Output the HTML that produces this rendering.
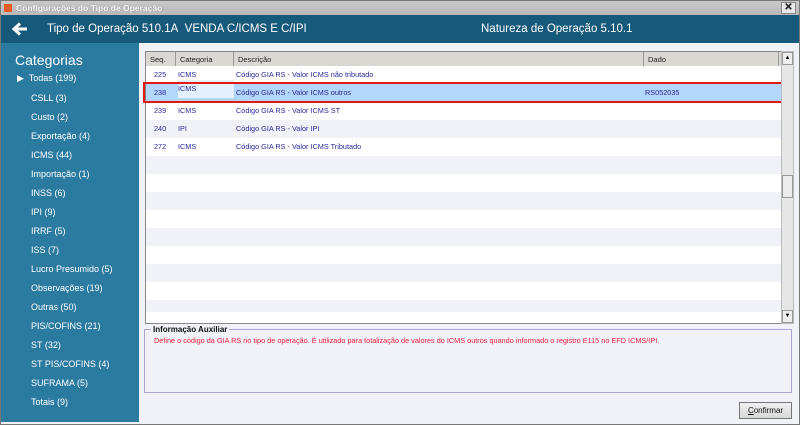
<!DOCTYPE html>
<html><head><meta charset="utf-8"><style>
*{margin:0;padding:0;box-sizing:border-box}
body{width:800px;height:425px;overflow:hidden;background:#6e6e6e;font-family:"Liberation Sans",sans-serif;position:relative}
.win{position:absolute;left:0;top:0;width:800px;height:425px;border:1px solid #777;background:#f1f2f8}
.tb{position:absolute;left:0;top:0;width:798px;height:14px;background:linear-gradient(#c9c9c9,#b9b9b9);font-size:8.5px;color:#fff;font-weight:bold;line-height:14px;padding-left:15px;text-shadow:0 0 1px #666}
.tb .ic{position:absolute;left:3px;top:3px;width:8px;height:8px;background:#e85a2a}
.tb .x{position:absolute;right:3px;top:1px;width:15px;height:12px;background:#e8e8e8;border:1px solid #888;color:#222;font-size:10px;line-height:10px;text-align:center}
.hd{position:absolute;left:0;top:14px;width:798px;height:28px;background:#17597a;color:#fff;font-size:11.5px;line-height:28px}
.side{position:absolute;left:0;top:42px;width:138px;height:379px;background:#2b7aa0;color:#fff}
.side .t{position:absolute;left:14px;top:9px;font-size:14px}
.side .i{position:absolute;left:30px;font-size:9px}
.grid{position:absolute;left:144px;top:50px;width:637px;height:273px;background:#f1f2f8;border:1px solid #888;border-right:none;overflow:hidden}
.gh{position:absolute;left:0;top:0;width:637px;height:15px;background:#dad8d2;border-bottom:1px solid #999;font-size:7.5px;color:#222}
.gh span{position:absolute;top:0;height:15px;line-height:15px;padding-left:4px;border-right:1px solid #999}
.row{position:absolute;left:0;width:637px;height:18px;font-size:7.3px;color:#2a2a9a;line-height:18px}
.row span{position:absolute}
.sb{position:absolute;left:780px;top:50px;width:13px;height:273px;background:#e6e6e6;border:1px solid #bbb}
.info{position:absolute;left:143px;top:328px;width:648px;height:64px;border:1px solid #a9a6d6}
.info .l{position:absolute;left:6px;top:-5px;background:#f1f2f8;font-size:8px;font-weight:bold;color:#111;padding:0 2px}
.info .d{position:absolute;left:9px;top:6px;font-size:7.3px;color:#e8203a;white-space:nowrap}
.btn{position:absolute;left:738px;top:401px;width:53px;height:17px;background:linear-gradient(#f0f0f0,#d8d8d8);border:1px solid #777;font-size:8px;text-align:center;line-height:15px;color:#111}
</style></head><body><div class="win">
<div class="tb"><div class="ic"></div>Configurações do Tipo de Operação<div class="x">✕</div></div>
<div class="hd"><svg style="position:absolute;left:11px;top:7px" width="16" height="14" viewBox="0 0 16 14"><path d="M15 7H3M8 1.5L2 7l6 5.5" stroke="#fff" stroke-width="3" fill="none"/></svg><span style="position:absolute;left:46px">Tipo de Operação 510.1A&nbsp; VENDA C/ICMS E C/IPI</span><span style="position:absolute;left:480px">Natureza de Operação 5.10.1</span></div>
<div class="side"><div class="t">Categorias</div>
<div class="i" style="left:16px;top:30px">▶&nbsp; Todas (199)</div>
<div class="i" style="top:50px">CSLL (3)</div>
<div class="i" style="top:69px">Custo (2)</div>
<div class="i" style="top:88px">Exportação (4)</div>
<div class="i" style="top:107px">ICMS (44)</div>
<div class="i" style="top:126px">Importação (1)</div>
<div class="i" style="top:145px">INSS (6)</div>
<div class="i" style="top:164px">IPI (9)</div>
<div class="i" style="top:183px">IRRF (5)</div>
<div class="i" style="top:202px">ISS (7)</div>
<div class="i" style="top:221px">Lucro Presumido (5)</div>
<div class="i" style="top:240px">Observações (19)</div>
<div class="i" style="top:259px">Outras (50)</div>
<div class="i" style="top:278px">PIS/COFINS (21)</div>
<div class="i" style="top:297px">ST (32)</div>
<div class="i" style="top:316px">ST PIS/COFINS (4)</div>
<div class="i" style="top:335px">SUFRAMA (5)</div>
<div class="i" style="top:354px">Totais (9)</div>
</div>
<div class="grid">
<div class="gh"><span style="left:0;width:30px">Seq.</span><span style="left:30px;width:58px">Categoria</span><span style="left:88px;width:410px">Descrição</span><span style="left:498px;width:135px">Dado</span></div>
<div class="row" style="top:14px;background:#fff"><span style="left:8px">225</span><span style="left:32px">ICMS</span><span style="left:90px">Código GIA RS - Valor ICMS não tributado</span></div>
<div class="row" style="top:32px;background:#b3d6fb"><span style="left:8px">238</span><span style="left:32px;top:-4px;width:56px;height:18px;background:#e4f0fd">ICMS</span><span style="left:90px">Código GIA RS - Valor ICMS outros</span><span style="left:499px">RS052035</span></div>
<div class="row" style="top:50px;background:#fff"><span style="left:8px">239</span><span style="left:32px">ICMS</span><span style="left:90px">Código GIA RS - Valor ICMS ST</span></div>
<div class="row" style="top:68px"><span style="left:8px">240</span><span style="left:32px">IPI</span><span style="left:90px">Código GIA RS - Valor IPI</span></div>
<div class="row" style="top:86px;background:#fff"><span style="left:8px">272</span><span style="left:32px">ICMS</span><span style="left:90px">Código GIA RS - Valor ICMS Tributado</span></div>
<div class="row" style="top:122px;background:#fff"></div>
<div class="row" style="top:158px;background:#fff"></div>
<div class="row" style="top:194px;background:#fff"></div>
<div class="row" style="top:230px;background:#fff"></div>
<div class="row" style="top:260px;background:#fff;height:13px"></div>
</div>
<div style="position:absolute;left:142px;top:81px;width:640px;height:21px;border:2px solid #e01818"></div>
<div class="sb"><div style="position:absolute;left:0;top:0;width:11px;height:13px;background:#eee;border:1px solid #999;font-size:6px;text-align:center;line-height:11px">▲</div><div style="position:absolute;left:0;top:123px;width:11px;height:23px;background:#ececec;border:1px solid #999"></div><div style="position:absolute;left:0;bottom:0;width:11px;height:13px;background:#eee;border:1px solid #999;font-size:6px;text-align:center;line-height:11px">▼</div></div>
<div class="info"><div class="l">Informação Auxiliar</div><div class="d">Define o código da GIA RS no tipo de operação. É utilizado para totalização de valores do ICMS outros quando informado o registro E115 no EFD ICMS/IPI.</div></div>
<div class="btn"><u>C</u>onfirmar</div>
</div></body></html>
